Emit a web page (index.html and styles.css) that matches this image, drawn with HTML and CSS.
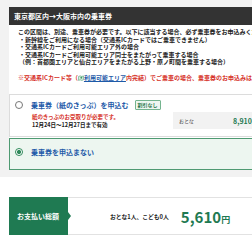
FILE: index.html
```html
<!DOCTYPE html>
<html lang="ja">
<head>
<meta charset="UTF-8" />
<meta name="viewport" content="width=device-width, initial-scale=1" />
<title>乗車券のお申込み</title>
<link rel="stylesheet" href="styles.css">
</head>
<body>

<div id="ticket-area">
  <div id="ticket-panel">
    <h2 class="panel-title">東京都区内→大阪市内の乗車券</h2>

    <div class="notice">
      <p>この区間は、別途、乗車券が必要です。以下に該当する場合、必ず乗車券をお申込みください。</p>
      <p class="item">・新幹線をご利用になる場合（交通系ICカードではご乗車できません）</p>
      <p class="item">・交通系ICカードご利用可能エリア外の場合</p>
      <p class="item">・交通系ICカードご利用可能エリア同士をまたがって乗車する場合</p>
      <p class="item sub">（例：首都圏エリアと仙台エリアをまたがる上野・原ノ町間を乗車する場合）</p>
      <p class="warn">※交通系ICカード等（<svg class="map-icon" viewBox="0 0 10 10"><path d="M1 2.5 L3.5 1.5 L6.5 2.5 L9 1.5 V8 L6.5 9 L3.5 8 L1 9 Z" fill="#e4f1e8" stroke="#3f9a68" stroke-width="1"/><circle cx="5.5" cy="4.5" r="1.6" fill="#3f9a68"/></svg><a class="area-link">利用可能エリア</a>内完結）でご乗車の場合、乗車券のお申込みは不要です。</p>
    </div>

    <!-- ticket options -->
    <div class="option">
      <div class="option-head">
        <span class="radio"></span>
        <span class="option-label">乗車券（紙のきっぷ）を申込む</span>
        <span class="badge">割引なし</span>
      </div>
      <div class="option-body">
        <div class="option-notes">
          <p class="note-red">紙のきっぷのお受取りが必要です。</p>
          <p class="note-date">12月24日〜12月27日まで有効</p>
        </div>
        <div class="fare">
          <span class="fare-type">おとな</span>
          <span class="fare-price">8,910円</span>
        </div>
      </div>
    </div>

    <div class="option selected">
      <div class="option-head">
        <span class="radio"></span>
        <span class="option-label">乗車券を申込まない</span>
      </div>
    </div>
  </div>
</div>

<div id="total">
  <div class="total-label">お支払い総額</div>
  <div class="total-body">
    <span class="total-count">おとな1人、こども0人</span>
    <span class="total-price">5,610<small>円</small></span>
  </div>
</div>

</body>
</html>
```

FILE: styles.css
```css
body {
  font-family: "Noto Sans CJK JP", "Noto Sans", sans-serif;
  margin: 0; padding: 0;
  background: #fff;
  color: #222;
  overflow: hidden;
}
p {
  margin: 0;
}
#ticket-area {
  background: #f2f2f2;
  padding: 7px 0 7px 9px;
}
#ticket-panel {
  width: 330px;
  background: #fff;
}
.panel-title {
  margin: 0;
  height: 18px;
  line-height: 18px;
  padding-left: 5px;
  background: #333;
  color: #fff;
  font-size: 7px;
  font-weight: bold;
}
.notice {
  padding: 3px 0 0 9px;
  font-size: 6px;
  line-height: 7.5px;
  font-weight: bold;
  white-space: nowrap;
}
.notice .item {
  padding-left: 1px;
}
.notice .warn {
  margin-top: 8px;
  color: #d6322a;
}
.map-icon {
  width: 6px;
  height: 6px;
  vertical-align: -1px;
}
.area-link {
  color: #1e5aa8;
  text-decoration: underline;
}
.option {
  margin-top: 13px;
  border: 1px solid #dcdcdc;
  padding: 5px 0 7px 5px;
}
.option + .option {
  margin-top: 1px;
}
.option-head {
  display: flex;
  align-items: center;
  height: 10px;
}
.radio {
  width: 8px;
  height: 8px;
  border: 1px solid #777;
  border-radius: 50%;
  background: #fff;
  box-sizing: border-box;
}
.option-label {
  margin-left: 8px;
  font-size: 7px;
  font-weight: bold;
  color: #1e5aa8;
}
.badge {
  margin-left: 6px;
  padding: 0 2px;
  height: 8px;
  line-height: 8px;
  font-size: 5px;
  font-weight: bold;
  color: #2d7a50;
  background: #eef7f1;
  border: 1px solid #74b48f;
  border-radius: 1px;
}
.option-body {
  display: flex;
  align-items: center;
  margin-top: 2px;
  padding-left: 17px;
}
.option-notes {
  width: 141px;
  font-size: 5.5px;
  line-height: 8px;
  font-weight: bold;
}
.note-red {
  color: #d6322a;
}
.fare {
  display: flex;
  align-items: center;
  width: 150px;
  height: 17px;
  padding-left: 6px;
  background: #f2f2f2;
}
.fare-type {
  width: 54px;
  font-size: 5px;
  color: #444;
}
.fare-price {
  font-size: 7px;
  font-weight: bold;
  color: #1f7a52;
}
.option.selected {
  background: #edf6f0;
  border-color: #4e9a72;
  padding: 8px 0 12px 5px;
}
.option.selected .radio {
  border: 1px solid #2f8a5a;
  background: radial-gradient(circle, #2f8a5a 0 2px, #fff 2.2px);
}
#total {
  display: flex;
  margin: 20px 0 0 9px;
  height: 38px;
}
.total-label {
  position: relative;
  flex: none;
  width: 59px;
  background: #1f7a52;
  color: #fff;
  font-size: 7px;
  font-weight: bold;
  line-height: 38px;
  padding-left: 8px;
  box-sizing: border-box;
  white-space: nowrap;
}
.total-label::after {
  content: "";
  position: absolute;
  right: -3px;
  top: 15px;
  border-left: 3px solid #1f7a52;
  border-top: 4px solid transparent;
  border-bottom: 4px solid transparent;
}
.total-body {
  display: flex;
  align-items: center;
  flex: none;
  width: 260px;
  padding-left: 42px;
  border-top: 1px solid #e2e2e2;
  border-bottom: 1px solid #e2e2e2;
  box-sizing: border-box;
  white-space: nowrap;
}
.total-count {
  font-size: 5.8px;
  font-weight: bold;
}
.total-price {
  margin-left: 12px;
  font-size: 15px;
  font-weight: bold;
  color: #1f7a52;
}
.total-price small {
  font-size: 9px;
}
```
